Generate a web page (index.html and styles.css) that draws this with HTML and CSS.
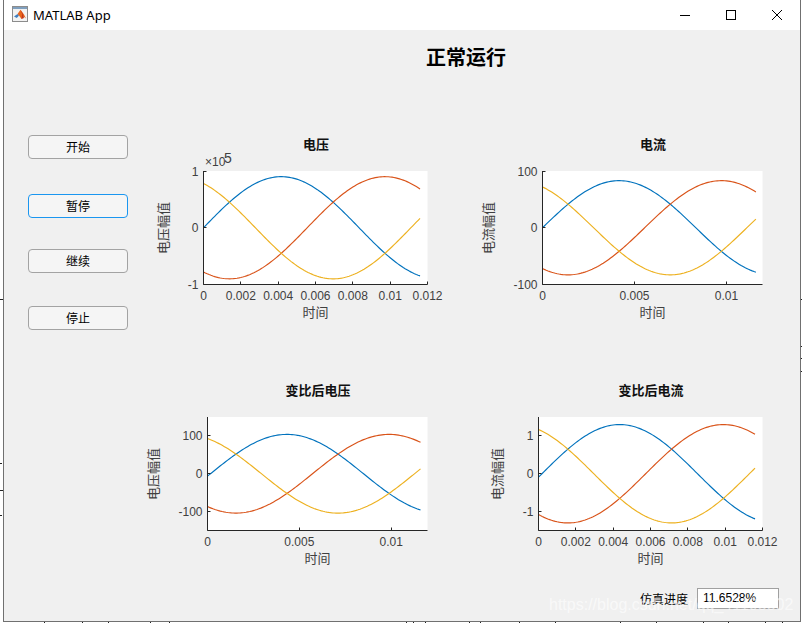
FILE: index.html
```html
<!DOCTYPE html>
<html lang="en">
<head>
  <meta charset="UTF-8">
  <meta name="viewport" content="width=device-width, initial-scale=1.0">
  <title>MATLAB App</title>
  <link rel="stylesheet" href="styles.css">
</head>
<body>
  <!-- Bits of the desktop showing around the window -->
  <svg class="desktop-marks" width="802" height="623">
    <path d="M0 299.5H3M0 463.5H2M0 490.5H3M0 515.5H2M801 299.5H802M801 346.5H802M801 358.5H802M801 371.5H802"/>
    <path d="M44.5 622V623M82.5 622V623M108.5 622V623M150.5 622V623M169.5 622V623M406.5 622V623M413.5 622V623M425.5 622V623M469.5 622V623M480.5 622V623M519.5 622V623M555.5 622V623M620.5 622V623M656.5 622V623M703.5 622V623M728.5 622V623M765.5 622V623M782.5 622V623"/>
  </svg>

  <div class="window">
    <header class="titlebar">
      <svg class="app-icon" width="16" height="16" viewBox="0 0 16 16">
        <rect x="0.5" y="0.5" width="15" height="15" fill="#f2f2f2" stroke="#8c8c8c"/>
        <rect x="1" y="1" width="14" height="2" fill="#7f9fbe"/>
        <path d="M2 10.5L5.5 8L7 9.5L4.8 12Z" fill="#3f7fbf"/>
        <path d="M5.5 8L8.5 3.8L12 8.5L14 12.5L11.5 10.5L9.5 13L7 9.5Z" fill="#e8641b"/>
        <path d="M8.5 3.8L10.2 8L9.5 13L12 12L10.5 7Z" fill="#c2361a"/>
      </svg>
      <span class="app-name">MATLAB App</span>
      <div class="window-btns">
        <svg width="12" height="12" viewBox="0 0 12 12"><path d="M1 6.5H11"/></svg>
        <svg width="12" height="12" viewBox="0 0 12 12"><rect x="1.5" y="1.5" width="9" height="9"/></svg>
        <svg width="12" height="12" viewBox="0 0 12 12"><path d="M1 1L11 11M11 1L1 11"/></svg>
      </div>
    </header>

    <div class="app">
      <div class="controls">
        <button class="btn">开始</button>
        <button class="btn focused">暂停</button>
        <button class="btn">继续</button>
        <button class="btn">停止</button>
      </div>

      <main class="main">
        <h1>正常运行</h1>
        <div class="plots" id="plots"></div>
        <div class="progress">
          <label>仿真进度</label>
          <div class="progress-value">11.6528%</div>
        </div>
      </main>
    </div>
  </div>

  <div class="watermark">https://blog.csdn.net/qq_41105502</div>

  <script src="script.js"></script>
</body>
</html>
```

FILE: styles.css
```css
body {
  margin: 0;
  background: white;
  font-family: "Liberation Sans", "Noto Sans CJK SC", sans-serif;
  overflow: hidden;
}

.desktop-marks {
  position: absolute;
  top: 0;
  left: 0;
}
.desktop-marks path {
  stroke: #222;
  fill: none;
}

/* Window */
.window {
  position: relative;
  box-sizing: border-box;
  width: 798px;
  height: 622px;
  margin-left: 3px;
  border: 1px solid #707070;
  border-top: none;
  background: #f0f0f0;
}

.titlebar {
  display: flex;
  align-items: center;
  height: 30px;
  padding-left: 8px;
  background: white;
}
.app-icon {
  margin-top: -2px;
}
.app-name {
  margin-left: 5px;
  font-family: "Noto Sans", sans-serif;
  font-size: 13px;
  color: #000;
}
.window-btns {
  display: flex;
  gap: 34px;
  margin-left: auto;
  margin-right: 17px;
}
.window-btns svg {
  margin-top: -1px;
  fill: none;
  stroke: #000;
}

/* App */
.app {
  display: flex;
}

.controls {
  display: grid;
  grid-template-rows: 59px 55px 57px 24px;
  align-items: start;
  flex: 0 0 112px;
  height: 195px;
  padding: 105px 0 0 24px;
  box-sizing: content-box;
  width: 112px;
}

.btn {
  width: 100px;
  height: 24px;
  padding: 0 0 2px;
  background: #f5f5f5;
  border: 1px solid #a3a3a3;
  border-radius: 4px;
  font-family: "Noto Sans CJK SC", sans-serif;
  font-size: 12px;
  color: #000;
}
.btn.focused {
  border-color: #1a96f0;
}

.main {
  flex: 1;
  padding-right: 6px;
}

h1 {
  margin: 15px 2px 61px 0;
  font-family: "Noto Sans CJK SC", sans-serif;
  font-size: 20px;
  line-height: 24px;
  font-weight: bold;
  text-align: center;
  color: #000;
}

.plots {
  display: grid;
  grid-template-columns: 330px 324px;
  grid-auto-rows: 200px;
  row-gap: 46px;
}
.plots svg {
  display: block;
}

/* Plot parts, drawn by script.js */
.plot-bg { fill: white; }
.axis { stroke: #262626; fill: none; }
.curve { fill: none; stroke-width: 1.15; }
.tick-label {
  font-size: 12px;
  fill: #404040;
}
.exponent {
  font-size: 14px;
}
.axis-label {
  font-family: "Noto Sans CJK SC", sans-serif;
  font-size: 13px;
  fill: #404040;
  text-anchor: middle;
}
.plot-title {
  font-family: "Noto Sans CJK SC", sans-serif;
  font-size: 13px;
  font-weight: bold;
  fill: #111;
  text-anchor: middle;
}

.progress {
  display: flex;
  align-items: center;
  justify-content: flex-end;
  gap: 9px;
  margin-top: 12px;
  padding-right: 15px;
}
.progress label {
  font-family: "Noto Sans CJK SC", sans-serif;
  font-size: 12px;
  color: #000;
}
.progress-value {
  box-sizing: border-box;
  width: 82px;
  height: 21px;
  padding-left: 5px;
  background: white;
  border: 1px solid #a0a0a0;
  font-size: 12px;
  line-height: 19px;
  color: #000;
}

.watermark {
  position: absolute;
  top: 594px;
  left: 549px;
  font-size: 16px;
  line-height: 22px;
  white-space: nowrap;
  color: rgba(255, 255, 255, 0.62);
}
```

FILE: script.js
```js
// Three phase curves, 60 Hz
const w = 2 * Math.PI * 60;
const colors = ["#0072BD", "#D95319", "#EDB120"];
const phases = [0, -120, 120];

const plots = [
  { title: "电压", ylabel: "电压幅值", left: 63.5, right: 287.5, labelX: 28, titleX: 176, titleY: 19,
    xmax: 0.012, ymax: 1, amp: 0.9, shift: 0, exponent: true,
    xticks: [["0", 0], ["0.002", 0.002], ["0.004", 0.004], ["0.006", 0.006], ["0.008", 0.008], ["0.01", 0.01], ["0.012", 0.012]],
    yticks: [["1", 1], ["0", 0], ["-1", -1]] },
  { title: "电流", ylabel: "电流幅值", left: 72.5, right: 292.5, labelX: 23, titleX: 183, titleY: 19,
    xmax: 0.01196, ymax: 100, amp: 83, shift: 0,
    xticks: [["0", 0], ["0.005", 0.005], ["0.01", 0.01]],
    yticks: [["100", 100], ["0", 0], ["-100", -100]] },
  { title: "变比后电压", ylabel: "电压幅值", left: 67.5, right: 287.5, labelX: 18, titleX: 178, titleY: 19,
    xmax: 0.01198, ymax: 150, amp: 104, shift: -3.5,
    xticks: [["0", 0], ["0.005", 0.005], ["0.01", 0.01]],
    yticks: [["100", 100], ["0", 0], ["-100", -100]] },
  { title: "变比后电流", ylabel: "电流幅值", left: 68.5, right: 292.5, labelX: 32, titleX: 181, titleY: 19,
    xmax: 0.012, ymax: 1.5, amp: 1.3, shift: -4,
    xticks: [["0", 0], ["0.002", 0.002], ["0.004", 0.004], ["0.006", 0.006], ["0.008", 0.008], ["0.01", 0.01], ["0.012", 0.012]],
    yticks: [["1", 1], ["0", 0], ["-1", -1]] }
];

const top_ = 41;
const bottom = 154.5;

function drawPlot(p) {
  const xAt = t => p.left + (t / p.xmax) * (p.right - p.left);
  const yAt = v => (top_ + bottom) / 2 - (v / p.ymax) * (bottom - top_) / 2;
  let s = `<svg width="${p.right > 290 ? 324 : 330}" height="200">`;
  s += `<rect class="plot-bg" x="${p.left}" y="${top_}" width="${p.right - p.left}" height="${bottom - top_}"/>`;

  colors.forEach((color, i) => {
    const pts = [];
    for (let t = 0; t <= 0.01168; t += 0.0001) {
      const v = p.amp * Math.sin(w * t + (phases[i] + p.shift) * Math.PI / 180);
      pts.push(xAt(t).toFixed(2) + "," + yAt(v).toFixed(2));
    }
    s += `<polyline class="curve" stroke="${color}" points="${pts.join(" ")}"/>`;
  });

  s += `<path class="axis" d="M${p.left} ${top_}V${bottom}H${p.right}"/>`;

  p.xticks.forEach(([text, t]) => {
    const x = Math.round(xAt(t) - 0.5) + 0.5;
    s += `<path class="axis" d="M${x} ${bottom}v-3"/>`;
    s += `<text class="tick-label" x="${xAt(t)}" y="170" text-anchor="middle">${text}</text>`;
  });
  p.yticks.forEach(([text, v]) => {
    const y = Math.round(yAt(v) - 0.5) + 0.5;
    s += `<path class="axis" d="M${p.left} ${y}h3"/>`;
    s += `<text class="tick-label" x="${p.left - 5}" y="${yAt(v) + 4.5}" text-anchor="end">${text}</text>`;
  });

  if (p.exponent) {
    s += `<text class="tick-label" x="65" y="36">×10</text>`;
    s += `<text class="tick-label exponent" x="84" y="33">5</text>`;
  }

  const midX = (p.left + p.right) / 2;
  s += `<text class="plot-title" x="${p.titleX}" y="${p.titleY}">${p.title}</text>`;
  s += `<text class="axis-label" x="${midX}" y="187">时间</text>`;
  s += `<text class="axis-label" transform="translate(${p.labelX} 98) rotate(-90)">${p.ylabel}</text>`;
  return s + "</svg>";
}

document.getElementById("plots").innerHTML = plots.map(drawPlot).join("");
```
